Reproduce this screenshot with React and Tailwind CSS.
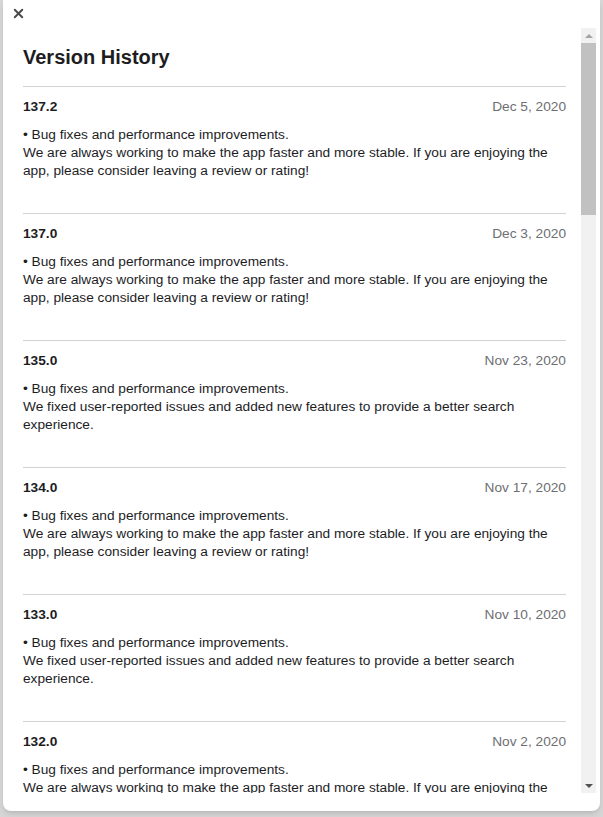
import { X } from 'lucide-react';

const entries = [
  { version: '137.2', date: 'Dec 5, 2020', note: 'We are always working to make the app faster and more stable. If you are enjoying the app, please consider leaving a review or rating!' },
  { version: '137.0', date: 'Dec 3, 2020', note: 'We are always working to make the app faster and more stable. If you are enjoying the app, please consider leaving a review or rating!' },
  { version: '135.0', date: 'Nov 23, 2020', note: 'We fixed user-reported issues and added new features to provide a better search experience.' },
  { version: '134.0', date: 'Nov 17, 2020', note: 'We are always working to make the app faster and more stable. If you are enjoying the app, please consider leaving a review or rating!' },
  { version: '133.0', date: 'Nov 10, 2020', note: 'We fixed user-reported issues and added new features to provide a better search experience.' },
  { version: '132.0', date: 'Nov 2, 2020', note: 'We are always working to make the app faster and more stable. If you are enjoying the app, please consider leaving a review or rating!' },
  { version: '131.0', date: 'Oct 26, 2020', note: 'We fixed user-reported issues and added new features to provide a better search experience.' }
];

function Scrollbar() {
  return (
    <div className="flex h-full w-[15px] shrink-0 flex-col bg-[#f1f1f1]">
      <div className="flex h-[15px] items-center justify-center">
        <span className="h-0 w-0 border-x-[4px] border-b-[4px] border-x-transparent border-b-[#a3a3a3]" />
      </div>
      <div className="h-[172px] bg-[#c1c1c1]" />
      <div className="flex-1" />
      <div className="flex h-[15px] items-center justify-center">
        <span className="h-0 w-0 border-x-[4px] border-t-[4px] border-x-transparent border-t-[#505050]" />
      </div>
    </div>
  );
}

export default function App() {
  return (
    <div
      className="h-[817px] w-[603px] overflow-hidden bg-[#d6d6d6] pl-[3px]"
      style={{ fontFamily: '"Liberation Sans", Arial, sans-serif' }}
    >
      <div className="flex h-[811px] w-[597px] flex-col rounded-b-lg bg-white shadow-md">
        <div className="h-[28px] pl-[7px] pt-[5px]">
          <button className="flex h-[16px] w-[16px] items-center justify-center text-[#4a4a4a]">
            <X size={15} strokeWidth={3} />
          </button>
        </div>

        <div className="flex h-[765px] pr-[4px]">
          <div className="h-full flex-1 overflow-hidden pl-[20px] pr-[15px]">
            <h1 className="pt-[17px] pb-[17px] text-[20px] font-bold leading-[24px] text-[#1d1d1f]">
              Version History
            </h1>

            {entries.map((entry) => (
              <section key={entry.version} className="border-t border-[#d2d2d7] pt-[11px] pb-[33px]">
                <div className="flex items-center justify-between text-[13.7px] leading-[18px]">
                  <span className="font-bold text-[#1d1d1f]">{entry.version}</span>
                  <span className="text-[#6e6e73]">{entry.date}</span>
                </div>
                <div className="mt-[10px] text-[13.7px] leading-[18px] text-[#1d1d1f]">
                  <p>• Bug fixes and performance improvements.</p>
                  <p>{entry.note}</p>
                </div>
              </section>
            ))}
          </div>
          <Scrollbar />
        </div>
      </div>
    </div>
  );
}
